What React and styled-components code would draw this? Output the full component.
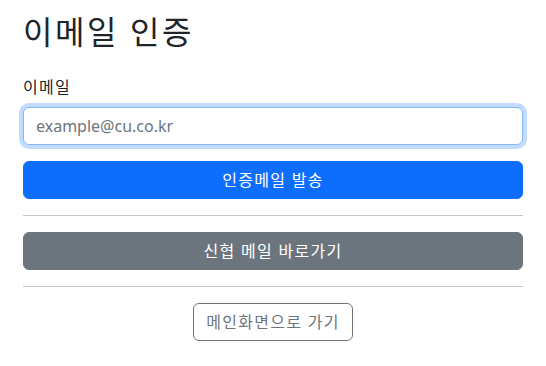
import React from "react";
import styled, { createGlobalStyle } from "styled-components";

const Global = createGlobalStyle`
  * { box-sizing: border-box; }
  body {
    margin: 0;
    background: #fff;
    color: #212529;
    font-family: "Noto Sans", "Noto Sans CJK KR", sans-serif;
    font-size: 16px;
    line-height: 1.5;
  }
`;

const Page = styled.div`
  padding: 13px 23px 0 23px;
  width: 546px;
`;

const Title = styled.h2`
  margin: 0 0 24px 0;
  font-size: 32px;
  font-weight: 400;
  line-height: 1.2;
  letter-spacing: 0.08em;
  color: #212529;
`;

const Label = styled.label`
  display: block;
  margin-bottom: 8px;
  font-size: 16px;
  line-height: 24px;
  letter-spacing: 0.08em;
`;

const Input = styled.input`
  display: block;
  width: 100%;
  height: 38px;
  padding: 6px 12px;
  font: inherit;
  color: #212529;
  border: 1px solid #86b7fe;
  border-radius: 6px;
  box-shadow: 0 0 0 4px rgba(13, 110, 253, 0.25);
  outline: none;
  &::placeholder { color: #6c757d; opacity: 1; }
`;

const Button = styled.button`
  display: ${(p) => (p.$block ? "block" : "inline-block")};
  width: ${(p) => (p.$block ? "100%" : "auto")};
  height: 38px;
  padding: 6px 12px;
  font: inherit;
  line-height: 24px;
  letter-spacing: 0.08em;
  border-radius: 6px;
  cursor: pointer;
  color: ${(p) => (p.$variant === "outline" ? "#6c757d" : "#fff")};
  background: ${(p) =>
    p.$variant === "primary" ? "#0d6efd" : p.$variant === "secondary" ? "#6c757d" : "#fff"};
  border: 1px solid
    ${(p) => (p.$variant === "primary" ? "#0d6efd" : "#6c757d")};
`;

const Spacer = styled.div`
  height: 16px;
`;

const Rule = styled.hr`
  margin: 16px 0;
  border: 0;
  border-top: 1px solid #c4c6c8;
`;

const Center = styled.div`
  display: flex;
  justify-content: center;
`;

export default function App() {
  return (
    <>
      <Global />
      <Page>
        <Title>이메일 인증</Title>
        <Label htmlFor="email">이메일</Label>
        <Input id="email" type="email" placeholder="example@cu.co.kr" />
        <Spacer />
        <Button $block $variant="primary">인증메일 발송</Button>
        <Rule />
        <Button $block $variant="secondary">신협 메일 바로가기</Button>
        <Rule />
        <Center>
          <Button $variant="outline">메인화면으로 가기</Button>
        </Center>
      </Page>
    </>
  );
}
